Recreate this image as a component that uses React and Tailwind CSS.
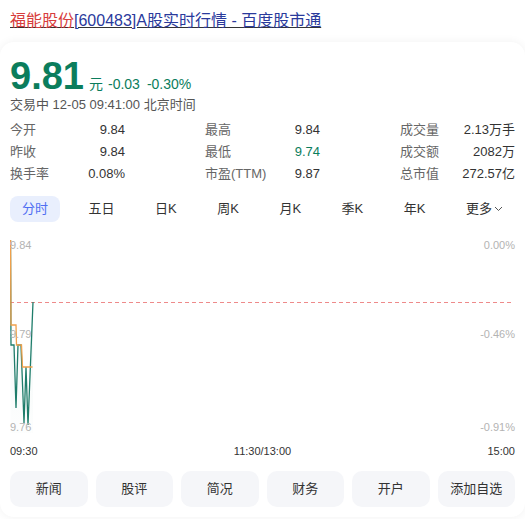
import React from 'react';

const GREEN = '#0b7d5c';

const stats = [
  ['今开', '9.84', '最高', '9.84', '成交量', '2.13万手'],
  ['昨收', '9.84', '最低', '9.74', '成交额', '2082万'],
  ['换手率', '0.08%', '市盈(TTM)', '9.87', '总市值', '272.57亿'],
];

const tabs = ['分时', '五日', '日K', '周K', '月K', '季K', '年K'];
const actions = ['新闻', '股评', '简况', '财务', '开户', '添加自选'];

// chart coords are relative to the svg (page x - 10, page y - 236)
const priceLine = [
  [0.5, 4], [1, 109], [4, 109], [6, 172], [8, 109], [11, 109],
  [14, 187], [16, 131], [18, 189], [23, 66],
];
const avgLine = [
  [0.5, 4], [1, 89], [6, 89], [6.5, 109], [11.5, 109], [12.5, 131], [22.5, 131],
];

const toPoints = (pts) => pts.map(([x, y]) => `${x},${y}`).join(' ');

const Chart = () => (
  <div className="relative mt-[14px] h-[200px]">
    <svg className="absolute inset-0" width="503" height="200" viewBox="0 0 503 200">
      <defs>
        <linearGradient id="area" x1="0" y1="0" x2="0" y2="1">
          <stop offset="0%" stopColor="#1f7d6b" stopOpacity="0.08" />
          <stop offset="100%" stopColor="#1f7d6b" stopOpacity="0.01" />
        </linearGradient>
      </defs>
      <polygon points={`${toPoints(priceLine)} 23,197 0.5,197`} fill="url(#area)" />
      <line x1="0" y1="66.5" x2="503" y2="66.5" stroke="#ee8a8a" strokeWidth="1" strokeDasharray="4 3" />
      <polyline points={toPoints(priceLine)} fill="none" stroke="#1f7d6b" strokeWidth="1.3" />
      <polyline points={toPoints(avgLine)} fill="none" stroke="#f0a04b" strokeWidth="1.3" />
    </svg>
    <div className="absolute left-0 top-[2px] text-[11px] leading-[14px] text-[#b3b3b3]">9.84</div>
    <div className="absolute left-0 top-[91px] text-[11px] leading-[14px] text-[#b3b3b3]">9.79</div>
    <div className="absolute left-0 top-[184px] text-[11px] leading-[14px] text-[#b3b3b3]">9.76</div>
    <div className="absolute right-0 top-[2px] text-[11px] leading-[14px] text-[#b3b3b3]">0.00%</div>
    <div className="absolute right-0 top-[91px] text-[11px] leading-[14px] text-[#b3b3b3]">-0.46%</div>
    <div className="absolute right-0 top-[184px] text-[11px] leading-[14px] text-[#b3b3b3]">-0.91%</div>
  </div>
);

export default function App() {
  return (
    <div
      className="w-[525px] h-[519px] overflow-hidden bg-white text-[#333]"
      style={{ fontFamily: '"Liberation Sans", "Noto Sans CJK SC", sans-serif' }}
    >
      {/* Title */}
      <div className="h-[42px] px-[10px] pt-[11px] text-[16px] leading-[20px]">
        <a href="#" className="underline">
          <span className="text-[#d73c3c]">福能股份</span>
          <span className="text-[#2a3a9c]">[600483]A股实时行情 - 百度股市通</span>
        </a>
      </div>

      {/* Card */}
      <div className="rounded-[14px] bg-white px-[10px] pt-[14px] pb-[10px] shadow-[0_0_10px_rgba(0,0,0,0.06)]">
        <div className="flex h-[40px] items-baseline leading-[40px]" style={{ color: GREEN }}>
          <span className="text-[38px] font-bold">9.81</span>
          <span className="ml-[5px] text-[14px] leading-[16px]">元</span>
          <span className="ml-[5px] text-[14px] leading-[16px]">-0.03</span>
          <span className="ml-[7px] text-[14px] leading-[16px]">-0.30%</span>
        </div>
        <div className="text-[13px] leading-[18px] text-[#555]">交易中 12-05 09:41:00 北京时间</div>

        {/* Stats */}
        <div className="mt-[5px] grid grid-cols-3 gap-x-[80px] text-[13px] leading-[22px]">
          {stats.map((row, i) => (
            <React.Fragment key={i}>
              {[0, 2, 4].map((j) => (
                <div key={j} className="flex justify-between">
                  <span className="text-[#666]">{row[j]}</span>
                  <span style={{ color: row[j + 1] === '9.74' ? GREEN : '#333' }}>{row[j + 1]}</span>
                </div>
              ))}
            </React.Fragment>
          ))}
        </div>

        {/* Tabs */}
        <div className="mt-[11px] flex justify-between text-[13px] leading-[26px]">
          {tabs.map((t, i) => (
            <div
              key={t}
              className={
                i === 0
                  ? 'rounded-[8px] bg-[#e9effd] px-[12px] text-[#4e6ef2]'
                  : 'px-[12px] text-[#333]'
              }
            >
              {t}
            </div>
          ))}
          <div className="flex items-center px-[12px] text-[#333]">
            更多
            <svg width="9" height="6" viewBox="0 0 9 6" className="ml-[2px]">
              <path d="M1 1l3.5 3.5L8 1" fill="none" stroke="#555" strokeWidth="1" />
            </svg>
          </div>
        </div>

        <Chart />

        <div className="mt-[8px] flex justify-between text-[11px] leading-[14px] text-[#333]">
          <span>09:30</span>
          <span>11:30/13:00</span>
          <span>15:00</span>
        </div>

        {/* Actions */}
        <div className="mt-[13px] grid grid-cols-6 gap-[8px]">
          {actions.map((a) => (
            <div
              key={a}
              className="flex h-[36px] items-center justify-center rounded-[10px] bg-[#f5f6f9] text-[13px] text-[#333]"
            >
              {a}
            </div>
          ))}
        </div>
      </div>
    </div>
  );
}
